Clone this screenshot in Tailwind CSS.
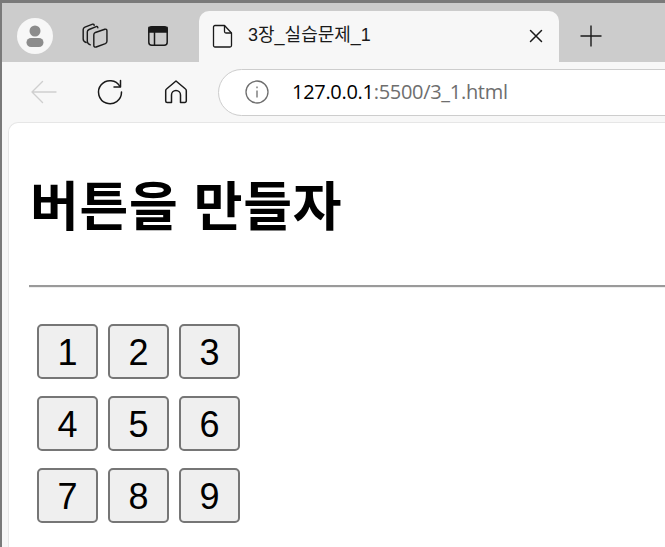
<!DOCTYPE html>
<html lang="ko">
<head>
    <meta charset="UTF-8">
    <meta name="viewport" content="width=device-width, initial-scale=1.0">
    <title>3장_실습문제_1</title>
    <script src="https://cdn.jsdelivr.net/npm/@tailwindcss/browser@4"></script>
</head>
<body class="bg-[#7a7a7a] overflow-hidden">
    <div class="h-[547px] w-[665px] overflow-hidden pt-[3px] pl-[2px] font-['Liberation_Sans','Noto_Sans_CJK_KR',sans-serif]">
        <!-- Tab strip -->
        <div class="h-[59px] bg-[#cccccc] flex">
            <div class="w-[197px] flex items-start shrink-0">
                <div class="ml-[15px] mt-[15px] w-9 h-9 shrink-0 rounded-full bg-[#f7f7f7] flex items-center justify-center">
                    <svg class="w-6 h-6 shrink-0" viewBox="0 0 24 24" fill="#8c8c8c">
                        <circle cx="12" cy="7" r="5.5"></circle>
                        <rect x="3.5" y="14" width="17" height="9" rx="4.5"></rect>
                    </svg>
                </div>
                <svg class="ml-[29px] mt-[20px] w-[26px] h-[26px] shrink-0" viewBox="1 2 22 22" fill="none" stroke="#1a1a1a" stroke-width="1.200" stroke-linejoin="round" stroke-linecap="round">
                    <path d="M4.500 18.500c-1.500-.5-2.500-1.500-2.500-3V7.500c0-1 .5-1.500 1.500-2L10 3c.8-.2 1.200.2 1.300 1"></path>
                    <path d="M8 20.500c-1.500-.5-2.500-1.500-2.500-3V9.500c0-1 .5-1.500 1.500-2l6-2.500c.8-.2 1.300.2 1.400 1"></path>
                    <path d="M11 12c0-1 .4-1.600 1.300-2l8-2.700c1-.3 1.800.2 1.800 1.200v9c0 1-.4 1.500-1.300 1.900L13 22.300c-1.100.4-2-.2-2-1.300z"></path>
                </svg>
                <svg class="ml-[38px] mt-[21px] w-6 h-6 shrink-0" viewBox="0 0 24 24" fill="none" stroke="#1a1a1a" stroke-width="1.500">
                    <rect x="2.800" y="2.800" width="18.400" height="18.400" rx="3"></rect>
                    <path d="M3 3.500h18V8H3z" fill="#1a1a1a"></path>
                    <path d="M8.500 8v13"></path>
                </svg>
            </div>
            <!-- Active tab -->
            <div class="mt-2 w-[360px] h-[51px] bg-[#f7f7f7] rounded-t-[10px] flex items-center shrink-0 pb-[2px]">
                <svg class="ml-[12px] w-6 h-6 shrink-0" viewBox="0 0 24 24" fill="none" stroke="#1a1a1a" stroke-width="1.300" stroke-linejoin="round">
                    <path d="M4 1.500h9.500l7 7.500v12.500a1.500 1.500 0 0 1-1.500 1.500H4a1.500 1.500 0 0 1-1.500-1.500V3A1.500 1.500 0 0 1 4 1.500z"></path>
                    <path d="M13.500 1.500v6a1.500 1.500 0 0 0 1.500 1.500h5.500"></path>
                </svg>
                <span class="ml-[13px] text-[18px] text-[#1a1a1a] w-[280px] shrink-0 whitespace-nowrap">3장_실습문제_1</span>
                <svg class="w-4 h-4 shrink-0" viewBox="0 0 16 16" stroke="#1a1a1a" stroke-width="1.500" stroke-linecap="round">
                    <path d="M2.500 2.500l11 11M13.500 2.500l-11 11"></path>
                </svg>
            </div>
            <svg class="ml-[20px] mt-[21px] w-6 h-6 shrink-0" viewBox="0 0 24 24" stroke="#1a1a1a" stroke-width="1.400">
                <path d="M12 1.500v21M1.500 12h21"></path>
            </svg>
        </div>

        <!-- Toolbar + page share the light chrome colour -->
        <div class="bg-[#f7f7f7]">
            <div class="h-[60px] flex items-center">
                <svg class="ml-[28px] w-7 h-7 shrink-0" viewBox="0 0 28 28" fill="none" stroke="#cfcfcf" stroke-width="1.400" stroke-linecap="round" stroke-linejoin="round">
                    <path d="M2 14h24M12.500 3.500L2 14l10.500 10.500"></path>
                </svg>
                <svg class="ml-[38px] w-7 h-7 shrink-0" viewBox="0 0 28 28" fill="none" stroke="#1a1a1a" stroke-width="1.500" stroke-linecap="round" stroke-linejoin="round">
                    <path d="M24 8.500A11.500 11.500 0 1 0 25.500 14"></path>
                    <path d="M24.500 2.500V9H18"></path>
                </svg>
                <svg class="ml-[38px] w-7 h-7 shrink-0" viewBox="0 0 28 28" fill="none" stroke="#1a1a1a" stroke-width="1.500" stroke-linejoin="round">
                    <path d="M14 3l9.500 8c.5.400.8 1 .8 1.700V23a1.500 1.500 0 0 1-1.500 1.500H18.500V17a4.500 4.500 0 0 0-9 0v7.500H5.200A1.500 1.500 0 0 1 3.700 23V12.700c0-.7.3-1.300.8-1.700z"></path>
                </svg>
                <div class="ml-[28px] h-[47px] w-[460px] shrink-0 bg-white border border-[#cdcdcd] rounded-l-full flex items-center">
                    <svg class="ml-[26px] w-6 h-6 shrink-0" viewBox="0 0 24 24" fill="none" stroke="#6e6e6e" stroke-width="1.300">
                        <circle cx="12" cy="12" r="11"></circle>
                        <path d="M12 10.500v7M12 6.500v1.800"></path>
                    </svg>
                    <span class="ml-[23px] text-[20px] tracking-[-0.3px] whitespace-nowrap text-[#6e6e6e] font-['Open_Sans','Liberation_Sans',sans-serif]"><span class="text-black">127.0.0.1</span>:5500/3_1.html</span>
                </div>
            </div>

            <!-- Page -->
            <div class="ml-[6px] h-[425px] bg-white rounded-tl-[10px] border-t border-l border-[#e6e6e6] pl-[20px]">
                <h1 class="mt-[50px] text-[53px] leading-[70px] font-bold text-black whitespace-nowrap pl-[1px] tracking-[0.7px]">버튼을 만들자</h1>
                <div class="mt-[42px] h-[3px] bg-[#9a9a9a] border-b border-[#eeeeee]"></div>
                <div class="mt-[36px] ml-[8px] grid grid-cols-[61px_61px_61px] gap-x-[10px] gap-y-[17px] w-max">
                    <button class="h-[55px] bg-[#efefef] border-2 border-[#767676] rounded-[5px] text-[36px] text-black">1</button>
                    <button class="h-[55px] bg-[#efefef] border-2 border-[#767676] rounded-[5px] text-[36px] text-black">2</button>
                    <button class="h-[55px] bg-[#efefef] border-2 border-[#767676] rounded-[5px] text-[36px] text-black">3</button>
                    <button class="h-[55px] bg-[#efefef] border-2 border-[#767676] rounded-[5px] text-[36px] text-black">4</button>
                    <button class="h-[55px] bg-[#efefef] border-2 border-[#767676] rounded-[5px] text-[36px] text-black">5</button>
                    <button class="h-[55px] bg-[#efefef] border-2 border-[#767676] rounded-[5px] text-[36px] text-black">6</button>
                    <button class="h-[55px] bg-[#efefef] border-2 border-[#767676] rounded-[5px] text-[36px] text-black">7</button>
                    <button class="h-[55px] bg-[#efefef] border-2 border-[#767676] rounded-[5px] text-[36px] text-black">8</button>
                    <button class="h-[55px] bg-[#efefef] border-2 border-[#767676] rounded-[5px] text-[36px] text-black">9</button>
                </div>
            </div>
        </div>
    </div>
</body>
</html>
